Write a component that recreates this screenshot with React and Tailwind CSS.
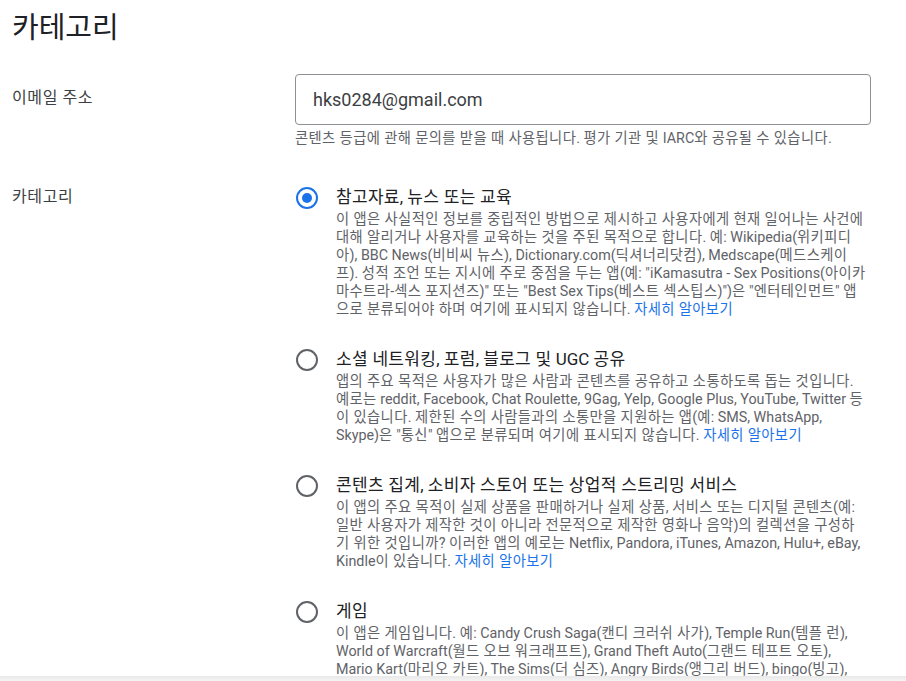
import React from 'react';

const FONT = { fontFamily: '"Roboto", "Noto Sans CJK KR", sans-serif' };

// Hangul runs get a little letter-spacing so Korean widths match the reference
const K = ({ text, track = 'tracking-[0.4px]' }) =>
  text.split(/([가-힣]+(?:\s+[가-힣]+)*)/).map((part, i) =>
    /[가-힣]/.test(part) ? (
      <span key={i} className={track}>
        {part}
      </span>
    ) : (
      <React.Fragment key={i}>{part}</React.Fragment>
    )
  );

const Radio = ({ checked }) => (
  <span
    className={`mt-[1px] flex h-[22px] w-[22px] shrink-0 items-center justify-center rounded-full border-2 ${
      checked ? 'border-[#1a73e8]' : 'border-[#5f6368]'
    }`}
  >
    {checked && <span className="h-[10px] w-[10px] rounded-full bg-[#1a73e8]" />}
  </span>
);

const Link = () => (
  <span className="tracking-[0.4px] text-[#1a73e8]">자세히 알아보기</span>
);

const categories = [
  {
    title: '참고자료, 뉴스 또는 교육',
    checked: true,
    lines: [
      '이 앱은 사실적인 정보를 중립적인 방법으로 제시하고 사용자에게 현재 일어나는 사건에',
      '대해 알리거나 사용자를 교육하는 것을 주된 목적으로 합니다. 예: Wikipedia(위키피디',
      '아), BBC News(비비씨 뉴스), Dictionary.com(딕셔너리닷컴), Medscape(메드스케이',
      '프). 성적 조언 또는 지시에 주로 중점을 두는 앱(예: "iKamasutra - Sex Positions(아이카',
      '마수트라-섹스 포지션즈)" 또는 "Best Sex Tips(베스트 섹스팁스)")은 "엔터테인먼트" 앱',
      '으로 분류되어야 하며 여기에 표시되지 않습니다. ',
    ],
    link: true,
  },
  {
    title: '소셜 네트워킹, 포럼, 블로그 및 UGC 공유',
    lines: [
      '앱의 주요 목적은 사용자가 많은 사람과 콘텐츠를 공유하고 소통하도록 돕는 것입니다.',
      '예로는 reddit, Facebook, Chat Roulette, 9Gag, Yelp, Google Plus, YouTube, Twitter 등',
      '이 있습니다. 제한된 수의 사람들과의 소통만을 지원하는 앱(예: SMS, WhatsApp,',
      'Skype)은 "통신" 앱으로 분류되며 여기에 표시되지 않습니다. ',
    ],
    link: true,
  },
  {
    title: '콘텐츠 집계, 소비자 스토어 또는 상업적 스트리밍 서비스',
    lines: [
      '이 앱의 주요 목적이 실제 상품을 판매하거나 실제 상품, 서비스 또는 디지털 콘텐츠(예:',
      '일반 사용자가 제작한 것이 아니라 전문적으로 제작한 영화나 음악)의 컬렉션을 구성하',
      '기 위한 것입니까? 이러한 앱의 예로는 Netflix, Pandora, iTunes, Amazon, Hulu+, eBay,',
      'Kindle이 있습니다. ',
    ],
    link: true,
  },
  {
    title: '게임',
    lines: [
      '이 앱은 게임입니다. 예: Candy Crush Saga(캔디 크러쉬 사가), Temple Run(템플 런),',
      'World of Warcraft(월드 오브 워크래프트), Grand Theft Auto(그랜드 테프트 오토),',
      'Mario Kart(마리오 카트), The Sims(더 심즈), Angry Birds(앵그리 버드), bingo(빙고),',
    ],
  },
];

export default function App() {
  return (
    <div className="h-[681px] overflow-hidden bg-white text-[#202124]" style={FONT}>
      <h1 className="pl-[12px] pt-[8px] text-[29px] leading-[40px] text-[#202124]">카테고리</h1>

      <div className="mt-[26px] flex">
        <div className="w-[295px] shrink-0 pl-[12px] pt-[13px] text-[16px] leading-[22px] tracking-[0.6px] text-[#3c4043]">
          이메일 주소
        </div>
        <div className="w-[576px]">
          <div className="flex h-[51px] items-center rounded-[4px] border border-[#8d9094] px-[17px] text-[18px] text-[#3c4043]">
            hks0284@gmail.com
          </div>
          <p className="mt-[3px] whitespace-nowrap text-[14.3px] leading-[20px] text-[#5f6368]">
            <K text="콘텐츠 등급에 관해 문의를 받을 때 사용됩니다. 평가 기관 및 IARC와 공유될 수 있습니다." />
          </p>
        </div>
      </div>

      <div className="mt-[38px] flex">
        <div className="w-[295px] shrink-0 pl-[12px] text-[16px] leading-[22px] tracking-[0.6px] text-[#3c4043]">
          카테고리
        </div>
        <div className="flex flex-col gap-[30px]">
          {categories.map((c) => (
            <div key={c.title} className="flex gap-[18px] pl-[1px]">
              <Radio checked={c.checked} />
              <div>
                <div className="whitespace-nowrap text-[17px] leading-[22px] text-[#202124]">
                  <K text={c.title} track="tracking-[0.3px]" />
                </div>
                <div className="mt-[2px] text-[14.3px] leading-[18px] text-[#5f6368]">
                  {c.lines.map((l, i) => (
                    <div key={i} className="whitespace-nowrap">
                      <K text={l} />
                      {c.link && i === c.lines.length - 1 && <Link />}
                    </div>
                  ))}
                </div>
              </div>
            </div>
          ))}
        </div>
      </div>

      <div className="fixed bottom-0 left-0 right-0 h-[5px] bg-gradient-to-b from-[#e8e8e8] to-[#f4f4f4]" />
    </div>
  );
}
